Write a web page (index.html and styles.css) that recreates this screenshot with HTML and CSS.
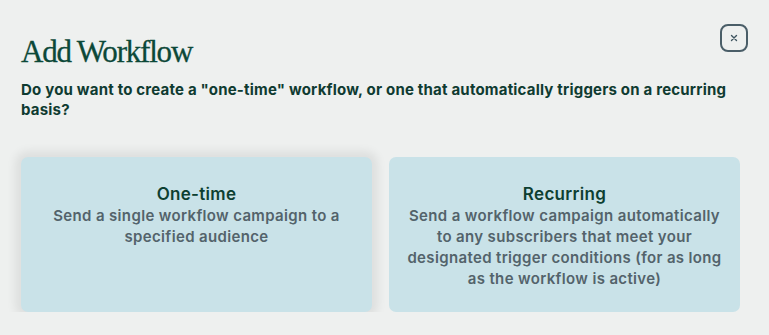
FILE: index.html
```html
<!DOCTYPE html>
<html>
<head>
<meta charset="utf-8">
<link rel="stylesheet" href="styles.css">
</head>
<body>
<div class="modal">
  <div class="header">
    <h1 class="title">Add Workflow</h1>
    <button class="close" aria-label="Close">
      <svg width="8" height="8" viewBox="0 0 8 8"><path d="M1.5 1.5L6.5 6.5M6.5 1.5L1.5 6.5" stroke="#3e5560" stroke-width="1.4" stroke-linecap="round"/></svg>
    </button>
  </div>
  <p class="question">Do you want to create a "one-time" workflow, or one that automatically triggers on a recurring basis?</p>
  <div class="options">
    <div class="card card-active">
      <div class="card-title">One-time</div>
      <div class="card-desc">Send a single workflow campaign to a specified audience</div>
    </div>
    <div class="card">
      <div class="card-title">Recurring</div>
      <div class="card-desc">Send a workflow campaign automatically to any subscribers that meet your designated trigger conditions (for as long as the workflow is active)</div>
    </div>
  </div>
</div>
</body>
</html>
```
FILE: styles.css
```css
html, body {
  margin: 0;
  padding: 0;
  background: #eef0ef;
}
body {
  font-family: Inter, "Noto Sans", sans-serif;
}
.modal {
  padding: 24px 21px 0 21px;
}
.header {
  display: flex;
  justify-content: space-between;
  align-items: flex-start;
}
.title {
  margin: 11px 0 0 0;
  font-family: "Liberation Serif", "DejaVu Serif", serif;
  font-weight: 400;
  font-size: 31px;
  line-height: 34px;
  color: #0c4838;
  letter-spacing: -1.2px;
  -webkit-text-stroke: 0.3px #0c4838;
}
.close {
  width: 28px;
  height: 28px;
  border: 2px solid #4a5e68;
  border-radius: 8px;
  background: transparent;
  display: flex;
  align-items: center;
  justify-content: center;
  padding: 0;
  margin: 0;
}
.question {
  margin: 11px 0 0 0;
  font-weight: 700;
  font-size: 15px;
  line-height: 20px;
  letter-spacing: 0.2px;
  color: #0f3b31;
}
.options {
  display: grid;
  grid-template-columns: 1fr 1fr;
  gap: 17px;
  margin: 37px 8px 0 0;
}
.card {
  background: #c9e2e8;
  border-radius: 7px;
  height: 155px;
  box-sizing: border-box;
  padding: 27px 18px 0 18px;
  text-align: center;
}
.card-active {
  box-shadow: 0 0 10px 6px rgba(0, 0, 0, 0.07);
}
.card-title {
  font-weight: 600;
  font-size: 17px;
  line-height: 20px;
  letter-spacing: 0.3px;
  color: #0d3f31;
}
.card-desc {
  margin-top: 1px;
  font-weight: 600;
  font-size: 15px;
  line-height: 21px;
  letter-spacing: 0.35px;
  color: #53636b;
}
```
